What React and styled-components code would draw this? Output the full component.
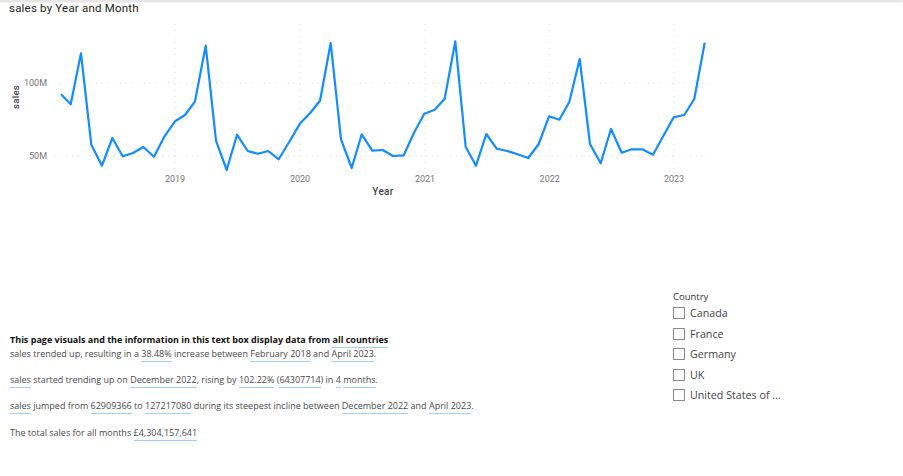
import React from 'react';
import styled, { createGlobalStyle } from 'styled-components';

const GlobalStyle = createGlobalStyle`
    html, body {
        margin: 0;
        padding: 0;
        background: #ffffff;
    }
`;

const Page = styled.div`
    width: 903px;
    height: 476px;
    overflow: hidden;
    display: flex;
    flex-direction: column;
    background: #ffffff;
`;

const TopEdge = styled.div`
    height: 1px;
    background: #e6e6e6;
    box-shadow: 0 1px 2px rgba(0, 0, 0, 0.22);
`;

const ChartPanel = styled.section`
    height: 279px;
    padding-left: 9px;
`;

const ChartTitle = styled.h2`
    margin: 0;
    height: 19px;
    font-family: Roboto, "Liberation Sans", sans-serif;
    font-size: 11.5px;
    line-height: 15px;
    font-weight: 400;
    letter-spacing: 0.2px;
    color: #252423;
`;

const ChartSvg = styled.svg`
    display: block;
    margin-left: -9px;
`;

const Lower = styled.div`
    display: flex;
    align-items: flex-start;
    padding-left: 10px;
    font-family: "Open Sans", "Liberation Sans", sans-serif;
`;

const TextBox = styled.div`
    width: 663px;
    padding-top: 53px;
    font-size: 9px;
    color: #4a4a4a;
`;

const Line = styled.p`
    margin: 0 0 ${(props) => props.$gap}px;
    height: 13px;
    line-height: 13px;
    white-space: nowrap;
    font-weight: ${(props) => (props.$bold ? 700 : 400)};
    color: ${(props) => (props.$bold ? '#111111' : 'inherit')};
`;

const Mark = styled.span`
    border-bottom: 1px solid #9fd2fb;
    padding-bottom: 1px;
`;

const Slicer = styled.div`
    display: flex;
    flex-direction: column;
    padding-top: 10px;
`;

const SlicerTitle = styled.div`
    font-size: 9.5px;
    line-height: 13px;
    color: #333333;
`;

const Option = styled.label`
    display: flex;
    align-items: center;
    gap: 5px;
    height: 20.5px;
    font-size: 10.7px;
    color: #444444;
`;

const Box = styled.span`
    width: 10px;
    height: 10px;
    border: 1px solid #8a8a8a;
    background: #ffffff;
`;

const points = [
    [61, 94.3], [70.7, 104.3], [81, 53.3], [91.3, 144.7], [102, 165.7], [112.3, 138], [122.7, 156.3],
    [133, 153], [143.3, 147], [154, 156.7], [164.3, 136.7], [175, 121.3], [185, 115], [195, 101.3],
    [205.7, 45.7], [216, 140.7], [226.7, 170], [237, 134.7], [247.7, 151], [257.7, 153.7], [268.3, 151],
    [278.7, 159.3], [289.3, 141.7], [300, 123.6], [310, 113.3], [320, 100.7], [330.7, 43], [341, 139.3],
    [351.7, 168], [361.7, 134.3], [372.3, 150.7], [382.7, 150], [393, 156], [403.7, 155.3], [414, 132.7],
    [424.3, 113.7], [434.7, 109.7], [444.7, 98.7], [455.3, 41.3], [465.7, 147], [476, 165.7], [486.3, 134],
    [496.7, 148.7], [507.3, 151], [517.7, 154.3], [528.3, 158], [538.7, 144], [549, 116.3], [559.3, 119.7],
    [569.3, 102], [579.7, 59], [590, 144], [600.7, 163.3], [611, 129], [621.7, 152.7], [631.7, 149.3],
    [642.3, 149.3], [653, 154.7], [663.3, 136], [673.7, 117.3], [684.3, 115], [694.3, 99], [704.7, 42.7],
];

const years = [
    { label: '2019', x: 175 },
    { label: '2020', x: 300 },
    { label: '2021', x: 425 },
    { label: '2022', x: 549.7 },
    { label: '2023', x: 674 },
];

const tickFont = 'Roboto, "Liberation Sans", sans-serif';
const countries = ['Canada', 'France', 'Germany', 'UK', 'United States of ...'];

// svg starts under the title, so y values are shifted by this much
const top = 20;

const SalesChart = () => (
    <ChartSvg width="903" height="190" viewBox={`0 ${top} 903 190`}>
        {[83, 155.7].map((y) => (
            <line key={y} x1="54" x2="712" y1={y} y2={y} stroke="#dcdcdc" strokeWidth="1" strokeDasharray="1 5" />
        ))}
        {years.map((year) => (
            <line key={year.x} x1={year.x} x2={year.x} y1="24" y2="171" stroke="#dcdcdc" strokeWidth="1" strokeDasharray="1 5" />
        ))}
        <polyline
            points={points.map((p) => p.join(',')).join(' ')}
            fill="none"
            stroke="#118dff"
            strokeWidth="2.2"
            strokeLinejoin="round"
        />
        <text x="47" y="86" textAnchor="end" fontFamily={tickFont} fontSize="9" fill="#777777">100M</text>
        <text x="47" y="159" textAnchor="end" fontFamily={tickFont} fontSize="9" fill="#777777">50M</text>
        {years.map((year) => (
            <text key={year.label} x={year.x} y="182" textAnchor="middle" fontFamily={tickFont} fontSize="9" fill="#777777">
                {year.label}
            </text>
        ))}
        <text
            transform="translate(19 97) rotate(-90)"
            textAnchor="middle"
            fontFamily={tickFont}
            fontSize="9.5"
            fontWeight="500"
            letterSpacing="0.3"
            fill="#3a3f4a"
        >
            sales
        </text>
        <text x="383" y="195" textAnchor="middle" fontFamily={tickFont} fontSize="10" fontWeight="500" letterSpacing="0.3" fill="#444444">
            Year
        </text>
    </ChartSvg>
);

const App = () => (
    <Page>
        <GlobalStyle />
        <TopEdge />
        <ChartPanel>
            <ChartTitle>sales by Year and Month</ChartTitle>
            <SalesChart />
        </ChartPanel>
        <Lower>
            <TextBox>
                <Line $bold $gap={1}>
                    This page visuals and the information in this text box display data from <Mark>all countries</Mark>
                </Line>
                <Line $gap={13}>
                    sales trended up, resulting in a <Mark>38.48%</Mark> increase between <Mark>February 2018</Mark> and <Mark>April 2023</Mark>.
                </Line>
                <Line $gap={13}>
                    <Mark>sales</Mark> started trending up on <Mark>December 2022</Mark>, rising by <Mark>102.22%</Mark> (<Mark>64307714</Mark>) in <Mark>4</Mark> <Mark>months</Mark>.
                </Line>
                <Line $gap={13.5}>
                    <Mark>sales</Mark> jumped from <Mark>62909366</Mark> to <Mark>127217080</Mark> during its steepest incline between <Mark>December 2022</Mark> and <Mark>April 2023</Mark>.
                </Line>
                <Line $gap={0}>
                    The total sales for all months <Mark>£4,304,157,641</Mark>
                </Line>
            </TextBox>
            <Slicer>
                <SlicerTitle>Country</SlicerTitle>
                {countries.map((name) => (
                    <Option key={name}>
                        <Box />
                        {name}
                    </Option>
                ))}
            </Slicer>
        </Lower>
    </Page>
);

export default App;
